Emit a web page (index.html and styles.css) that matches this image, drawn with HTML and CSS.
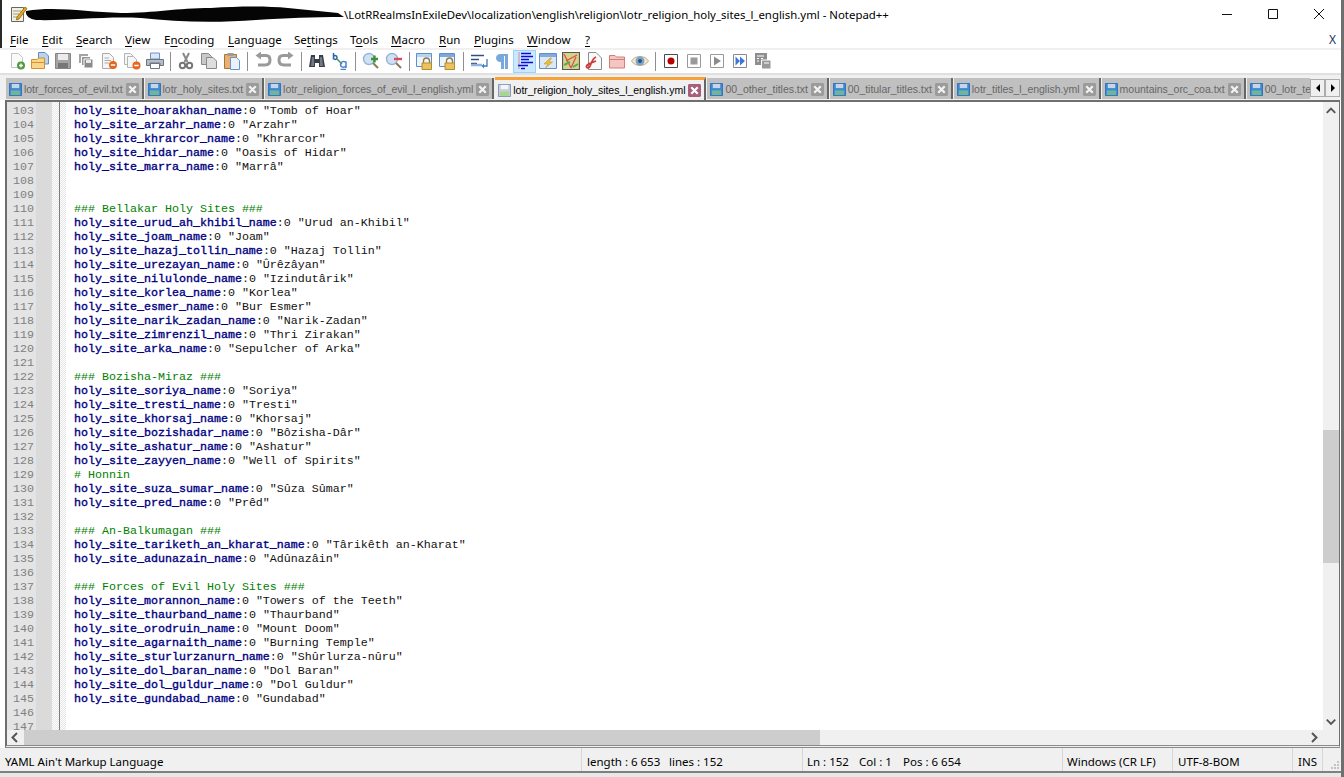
FILE: index.html
```html
<!DOCTYPE html>
<html lang="en">
<head>
<meta charset="utf-8">
<title>Notepad++</title>
<link rel="stylesheet" href="styles.css">
</head>
<body>
<svg class="defs" width="0" height="0" aria-hidden="true">
  <defs>
    <symbol id="floppy" viewBox="0 0 14 14">
      <path d="M0.5 0.5H13.5V13.5H0.5Z" fill="#3f88d6" stroke="#2c6fb8"/>
      <path d="M3 1H11V5.5H3Z" fill="#c6d6e6"/>
      <path d="M2 8H12V13H2Z" fill="#6fb59c"/>
    </symbol>
    <symbol id="floppy-active" viewBox="0 0 14 14">
      <path d="M0.5 0.5H13.5V13.5H0.5Z" fill="#c9cfe0" stroke="#7d8fb8"/>
      <path d="M3 1H11V5.5H3Z" fill="#f4f6fa"/>
      <path d="M2 8H12V13H2Z" fill="#a9d68f"/>
    </symbol>
    <symbol id="close" viewBox="0 0 14 14">
      <rect width="14" height="14" rx="1.5" fill="#9b9b9b"/>
      <path d="M3.5 3.5L10.5 10.5M10.5 3.5L3.5 10.5" stroke="#f2f2f2" stroke-width="2.4"/>
    </symbol>
    <symbol id="close-active" viewBox="0 0 14 14">
      <rect width="14" height="14" rx="1.5" fill="#a55f78"/>
      <path d="M3.5 3.5L10.5 10.5M10.5 3.5L3.5 10.5" stroke="#fff" stroke-width="2.4"/>
    </symbol>
  </defs>
</svg>
<div class="window">
  <header class="titlebar">
    <svg class="app-icon" width="18" height="18" viewBox="0 0 18 18"><path d="M1.5 2.5H13.5V16.5H1.5Z" fill="#f4f0d8" stroke="#666"/><path d="M3 6H11M3 9H9M3 12H8" stroke="#9a9a9a"/><path d="M7 12L15 2L17 3.5L9 14L6.5 15Z" fill="#e8a61c" stroke="#7a5a10" stroke-width=".7"/></svg>
    <svg class="blob" width="320" height="20" viewBox="0 0 318 20"><path d="M0 8C30 3 60 9 95 10C130 10 150 5 185 5C215 3 240 3 262 5L312 10L318 14C285 14 262 15 230 17C190 20 150 19 115 15C80 13 40 18 10 17C3 16-1 12 0 8Z" fill="#050505"/></svg>
    <span class="path">\LotRRealmsInExileDev\localization\english\religion\lotr_religion_holy_sites_l_english.yml - Notepad++</span>
    <div class="controls">
      <svg width="46" height="30" viewBox="0 0 46 30"><path d="M18 14.500H28" stroke="#111"/></svg>
      <svg width="46" height="30" viewBox="0 0 46 30"><path d="M18.500 9.500H27.500V18.500H18.500Z" fill="none" stroke="#111"/></svg>
      <svg width="46" height="30" viewBox="0 0 46 30"><path d="M18 9L28 19M28 9L18 19" stroke="#111"/></svg>
    </div>
  </header>
  <nav class="menubar">
    <span class="m m-file"><u>F</u>ile</span>
    <span class="m m-edit"><u>E</u>dit</span>
    <span class="m m-search"><u>S</u>earch</span>
    <span class="m m-view"><u>V</u>iew</span>
    <span class="m m-enc">E<u>n</u>coding</span>
    <span class="m m-lang"><u>L</u>anguage</span>
    <span class="m m-set">Se<u>t</u>tings</span>
    <span class="m m-tools">T<u>o</u>ols</span>
    <span class="m m-macro"><u>M</u>acro</span>
    <span class="m m-run"><u>R</u>un</span>
    <span class="m m-plug"><u>P</u>lugins</span>
    <span class="m m-win"><u>W</u>indow</span>
    <span class="m"><u>?</u></span>
    <span class="menu-x">X</span>
  </nav>
  <div class="toolbar">
    <span class="b"><svg viewBox="0 0 18 18"><path d="M3.500 1.500H10.500L14.500 5.500V15.500H3.500Z" fill="#fafafa" stroke="#c4c4c4"/><circle cx="13" cy="13.500" r="4" fill="#4f9a3d"/><path d="M13 11.500V15.500M11 13.500H15" stroke="#fff" stroke-width="1.300"/></svg></span>
    <span class="b"><svg viewBox="0 0 18 18"><path d="M7.500 .5H14L17.500 4V12H7.500Z" fill="#bcd3ee" stroke="#5c8fcb"/><path d="M.5 7.500H6L7.500 6H13.500V16.500H.5Z" fill="#f7d58a" stroke="#d98f2c"/><path d="M1 10.500H13" stroke="#d98f2c"/></svg></span>
    <span class="b"><svg viewBox="0 0 18 18"><path d="M1.500 1.500H16.500V16.500H1.500Z" fill="#a4a4a4" stroke="#858585"/><path d="M4 2H14V8H4Z" fill="#ececec"/><path d="M4 11H14V16H4Z" fill="#777"/></svg></span>
    <span class="b"><svg viewBox="0 0 18 18"><path d="M2 2H11V11H2Z" fill="#a4a4a4"/><path d="M4.500 4.500H13.500V13.500H4.500Z" fill="#949494" stroke="#fff"/><path d="M7 7H16V16H7Z" fill="#8a8a8a" stroke="#fff"/><path d="M9 8H14V11H9Z" fill="#e8e8e8"/></svg></span>
    <span class="b"><svg viewBox="0 0 18 18"><path d="M2.500 1.500H9.500L13.500 5.500V16.500H2.500Z" fill="#f6f6f6" stroke="#aaa"/><path d="M4.500 6H9M4.500 8.500H11M4.500 11H9" stroke="#aaa"/><circle cx="13" cy="13" r="4" fill="#e8661c"/><path d="M10.800 13H15.200" stroke="#fff" stroke-width="1.500"/></svg></span>
    <span class="b"><svg viewBox="0 0 18 18"><path d="M1.500 1.500H7.500L10.500 4.500V12.500H1.500Z" fill="#f6f6f6" stroke="#b4b4b4"/><path d="M4.500 4.500H10.500L13.500 7.500V15.500H4.500Z" fill="#f6f6f6" stroke="#b4b4b4"/><circle cx="13.500" cy="13.500" r="4" fill="#e8661c"/><path d="M11.300 13.500H15.700" stroke="#fff" stroke-width="1.500"/></svg></span>
    <span class="b"><svg viewBox="0 0 18 18"><path d="M4.500 1H13.500V7H4.500Z" fill="#dbe7f6" stroke="#6b93c8"/><path d="M.5 7.500H17.500V13.500H14V11H4V13.500H.5Z" fill="#b4bcc8" stroke="#6d7480"/><path d="M4.500 11.500H13.500V16.500H4.500Z" fill="#fff" stroke="#6d7480"/></svg></span>
    <i class="sep"></i>
    <span class="b"><svg viewBox="0 0 18 18"><path d="M12 1L7.500 10M6 1L10.500 10" stroke="#8a8a8a" stroke-width="2"/><circle cx="5.500" cy="13.500" r="2.700" fill="none" stroke="#777" stroke-width="2"/><circle cx="12.500" cy="13.500" r="2.700" fill="none" stroke="#777" stroke-width="2"/></svg></span>
    <span class="b"><svg viewBox="0 0 18 18"><path d="M1.500 1.500H8.500L11.500 4.500V12.500H1.500Z" fill="#c9c9c9" stroke="#8a8a8a"/><path d="M6.500 5.500H13L16.500 9V16.500H6.500Z" fill="#dedede" stroke="#8a8a8a"/></svg></span>
    <span class="b"><svg viewBox="0 0 18 18"><path d="M1.500 2.500H13.500V16.500H1.500Z" fill="#e6b173" stroke="#a9743a"/><path d="M4.500 1H10.500V4H4.500Z" fill="#9b9b9b"/><path d="M7.500 5.500H13.500L16.500 8.500V17.500H7.500Z" fill="#e9f1fb" stroke="#6b93c8"/></svg></span>
    <i class="sep"></i>
    <span class="b"><svg viewBox="0 0 18 18"><path d="M7 3.500H12C15 3.500 16 5.500 16 8C16 11.500 14 13 11 13H4" fill="none" stroke="#9a9a9a" stroke-width="3"/><path d="M7 -.5V7.500L1.500 3.500Z" fill="#9a9a9a"/></svg></span>
    <span class="b"><svg viewBox="0 0 18 18"><path d="M11 3.500H6C3 3.500 2 5.500 2 8C2 11.500 4 13 7 13H14" fill="none" stroke="#9a9a9a" stroke-width="3"/><path d="M11 -.5V7.500L16.500 3.500Z" fill="#9a9a9a"/></svg></span>
    <i class="sep"></i>
    <span class="b"><svg viewBox="0 0 18 18"><path d="M3 3H7V7H11V3H15L17 15H11V11H7V15H1Z" fill="#3a3f46"/><path d="M4 5H6V14H3ZM12 5H14L15 14H12Z" fill="#717b88"/></svg></span>
    <span class="b"><svg viewBox="0 0 18 18"><path d="M2.500 1V7.500M2.500 4.500C4 3 6 3.500 6 5.500C6 7.500 4 8 2.500 6.500" fill="none" stroke="#2a62b4" stroke-width="1.500"/><path d="M6 7L11 12" stroke="#4f9a3d" stroke-width="1.500"/><path d="M15 10.500C13 8.500 9.500 9.500 9.500 12.500C9.500 15.500 13 16 15 14M15 9.500V16M9.500 17.500H15" fill="none" stroke="#4a82d0" stroke-width="1.500"/></svg></span>
    <i class="sep"></i>
    <span class="b"><svg viewBox="0 0 18 18"><circle cx="7" cy="7" r="5.500" fill="#cfe2f5" stroke="#96b5d6" stroke-width="1.400"/><path d="M11 11L16 16" stroke="#8a7a5a" stroke-width="2"/><path d="M12.500 3.500V10.500M9 7H16" stroke="#3f8f34" stroke-width="2.400"/></svg></span>
    <span class="b"><svg viewBox="0 0 18 18"><circle cx="7" cy="7" r="5.500" fill="#cfe2f5" stroke="#96b5d6" stroke-width="1.400"/><path d="M11 11L16 16" stroke="#8a7a5a" stroke-width="2"/><path d="M9 7H17" stroke="#e2465a" stroke-width="2.400"/></svg></span>
    <i class="sep"></i>
    <span class="b"><svg viewBox="0 0 18 18"><path d="M.5 1.500H15.500V14.500H.5Z" fill="#eef4fb" stroke="#5e8fc8"/><path d="M1 2H15V5H1Z" fill="#bcd3ee"/><path d="M7.500 11V9A3 3 0 0 1 13.500 9V11" fill="none" stroke="#8f7a3a" stroke-width="1.300"/><path d="M6 11H15.500V17.500H6Z" fill="#edc25e" stroke="#b58c2c"/></svg></span>
    <span class="b"><svg viewBox="0 0 18 18"><path d="M.5 1.500H15.500V14.500H.5Z" fill="#eef4fb" stroke="#5e8fc8"/><path d="M1 2H15V5H1Z" fill="#7fa8dc"/><path d="M7.500 11V9A3 3 0 0 1 13.500 9V11" fill="none" stroke="#8f7a3a" stroke-width="1.300"/><path d="M6 11H15.500V17.500H6Z" fill="#edc25e" stroke="#b58c2c"/></svg></span>
    <i class="sep"></i>
    <span class="b"><svg viewBox="0 0 18 18"><path d="M1 3.500H14M1 7.500H9M1 11.500H7" stroke="#33507c" stroke-width="1.400"/><path d="M1 13H12" stroke="#8fb3de" stroke-width="2.500"/><path d="M17 7V14H13" fill="none" stroke="#3f78c4" stroke-width="1.300"/><path d="M14 11.500V16.500L11.500 14Z" fill="#3f78c4"/></svg></span>
    <span class="b"><svg viewBox="0 0 18 18"><path d="M15 2H7.500C4.500 2 3 4 3 6C3 8 4.500 10 7.500 10H8V17H11V4H12V17H15Z" fill="#79a9dc"/></svg></span>
    <span class="b active"><svg viewBox="0 0 18 18"><path d="M3 .5V17" stroke="#d0343a" stroke-dasharray="1 1"/><path d="M5 1.500H15M5 4.500H17M5 7.500H13M5 10.500H17M2 13.500H12M5 16.500H9" stroke="#0b0bdc" stroke-width="1.600"/></svg></span>
    <span class="b"><svg viewBox="0 0 18 18"><path d="M.5 1.500H17.500V16.500H.5Z" fill="#dbe8f7" stroke="#5e8fc8"/><path d="M1 2H17V5H1Z" fill="#83aadc"/><path d="M11 6L5 12H9L6.500 16L13.500 10H10L12.500 6Z" fill="#e9c23a" stroke="#c08f1c" stroke-width=".5"/></svg></span>
    <span class="b"><svg viewBox="0 0 18 18"><path d="M.5 .5H17.500V17.500H.5Z" fill="#d6d28a" stroke="#565656" stroke-width="1.200"/><path d="M2 2L9 16M4 9L15 3M9 16L14 5" stroke="#d9534a" stroke-width="1.300"/><path d="M2 13L8 10M11 15L16 12" stroke="#5ea850" stroke-width="2"/></svg></span>
    <span class="b"><svg viewBox="0 0 18 18"><path d="M3.500 .5H11L16.500 6V17.500H3.500Z" fill="#fafafa" stroke="#8c8c8c"/><path d="M11 5C8 6 7 9 5.500 13C5 15 3 17 1.500 15C1 13 3 12.500 6 11L11 9" fill="none" stroke="#cf3a36" stroke-width="1.800"/></svg></span>
    <span class="b"><svg viewBox="0 0 18 18"><path d="M1.500 3.500H7L8.500 5H16.500V16H1.500Z" fill="#f3c6c2" stroke="#d27d78"/><path d="M2 7.500H16" stroke="#d27d78"/></svg></span>
    <span class="b"><svg viewBox="0 0 18 18"><path d="M.5 9C4 3 14 3 17.500 9C14 15 4 15 .5 9Z" fill="#f4ead4" stroke="#c9ab7a"/><circle cx="9" cy="9" r="4.500" fill="#78a6d2"/><circle cx="9" cy="9" r="2" fill="#37506e"/></svg></span>
    <i class="sep"></i>
    <span class="b"><svg viewBox="0 0 18 18"><path d="M2.500 2.500H15.500V15.500H2.500Z" fill="#fff" stroke="#4a4a4a"/><circle cx="9" cy="9" r="3.500" fill="#b40000"/></svg></span>
    <span class="b"><svg viewBox="0 0 18 18"><path d="M2.500 2.500H15.500V15.500H2.500Z" fill="#fff" stroke="#9a9a9a"/><path d="M5.500 5.500H12.500V12.500H5.500Z" fill="#9a9a9a"/></svg></span>
    <span class="b"><svg viewBox="0 0 18 18"><path d="M2.500 2.500H15.500V15.500H2.500Z" fill="#fff" stroke="#9a9a9a"/><path d="M6 4.500L13 9L6 13.500Z" fill="#8c8c8c"/></svg></span>
    <span class="b"><svg viewBox="0 0 18 18"><path d="M2.500 2.500H15.500V15.500H2.500Z" fill="#fff" stroke="#8a8a8a"/><path d="M4.500 4.500L9 9L4.500 13.500ZM9 4.500L14 9L9 13.500Z" fill="#3b78d4"/></svg></span>
    <span class="b"><svg viewBox="0 0 18 18"><path d="M1 1H13V13H1Z" fill="#8e8e8e"/><path d="M3 4H10M3 6.500H5M7 6.500H9M3 9H5" stroke="#fff"/><path d="M7.500 8H17V17H7.500Z" fill="#9a9a9a" stroke="#fff"/><path d="M10 11H15" stroke="#fff"/></svg></span>
  </div>
  <div class="tabbar">
    <div class="tabs">
      <div class="tab"><svg class="ico"><use href="#floppy"/></svg><span>lotr_forces_of_evil.txt</span><svg class="ico"><use href="#close"/></svg></div>
      <div class="tab"><svg class="ico"><use href="#floppy"/></svg><span>lotr_holy_sites.txt</span><svg class="ico"><use href="#close"/></svg></div>
      <div class="tab"><svg class="ico"><use href="#floppy"/></svg><span>lotr_religion_forces_of_evil_l_english.yml</span><svg class="ico"><use href="#close"/></svg></div>
      <div class="tab current"><svg class="ico"><use href="#floppy-active"/></svg><span>lotr_religion_holy_sites_l_english.yml</span><svg class="ico"><use href="#close-active"/></svg></div>
      <div class="tab"><svg class="ico"><use href="#floppy"/></svg><span>00_other_titles.txt</span><svg class="ico"><use href="#close"/></svg></div>
      <div class="tab"><svg class="ico"><use href="#floppy"/></svg><span>00_titular_titles.txt</span><svg class="ico"><use href="#close"/></svg></div>
      <div class="tab"><svg class="ico"><use href="#floppy"/></svg><span>lotr_titles_l_english.yml</span><svg class="ico"><use href="#close"/></svg></div>
      <div class="tab"><svg class="ico"><use href="#floppy"/></svg><span>mountains_orc_coa.txt</span><svg class="ico"><use href="#close"/></svg></div>
      <div class="tab"><svg class="ico"><use href="#floppy"/></svg><span>00_lotr_texts.txt</span><svg class="ico"><use href="#close"/></svg></div>
    </div>
    <div class="tab-arrows">
      <span class="ta"><svg width="6" height="8" viewBox="0 0 6 8"><path d="M5 0V8L1 4Z" fill="#000"/></svg></span>
      <span class="ta"><svg width="6" height="8" viewBox="0 0 6 8"><path d="M1 0V8L5 4Z" fill="#000"/></svg></span>
    </div>
  </div>
  <main class="frame">
    <div class="editor">
      <div class="gutter">
        <div>103</div><div>104</div><div>105</div><div>106</div><div>107</div><div>108</div><div>109</div><div>110</div><div>111</div><div>112</div><div>113</div><div>114</div><div>115</div><div>116</div><div>117</div><div>118</div><div>119</div><div>120</div><div>121</div><div>122</div><div>123</div><div>124</div><div>125</div><div>126</div><div>127</div><div>128</div><div>129</div><div>130</div><div>131</div><div>132</div><div>133</div><div>134</div><div>135</div><div>136</div><div>137</div><div>138</div><div>139</div><div>140</div><div>141</div><div>142</div><div>143</div><div>144</div><div>145</div><div>146</div><div>147</div>
      </div>
      <div class="hatch"></div>
      <div class="rule"></div>
      <div class="hatch short"></div>
      <div class="code">
        <div><b>holy_site_hoarakhan_name</b>:0 "Tomb of Hoar"</div>
        <div><b>holy_site_arzahr_name</b>:0 "Arzahr"</div>
        <div><b>holy_site_khrarcor_name</b>:0 "Khrarcor"</div>
        <div><b>holy_site_hidar_name</b>:0 "Oasis of Hidar"</div>
        <div><b>holy_site_marra_name</b>:0 "Marrâ"</div>
        <div></div>
        <div></div>
        <div class="c">### Bellakar Holy Sites ###</div>
        <div><b>holy_site_urud_ah_khibil_name</b>:0 "Urud an-Khibil"</div>
        <div><b>holy_site_joam_name</b>:0 "Joam"</div>
        <div><b>holy_site_hazaj_tollin_name</b>:0 "Hazaj Tollin"</div>
        <div><b>holy_site_urezayan_name</b>:0 "Ûrêzâyan"</div>
        <div><b>holy_site_nilulonde_name</b>:0 "Izindutârik"</div>
        <div><b>holy_site_korlea_name</b>:0 "Korlea"</div>
        <div><b>holy_site_esmer_name</b>:0 "Bur Esmer"</div>
        <div><b>holy_site_narik_zadan_name</b>:0 "Narik-Zadan"</div>
        <div><b>holy_site_zimrenzil_name</b>:0 "Thri Zirakan"</div>
        <div><b>holy_site_arka_name</b>:0 "Sepulcher of Arka"</div>
        <div></div>
        <div class="c">### Bozisha-Miraz ###</div>
        <div><b>holy_site_soriya_name</b>:0 "Soriya"</div>
        <div><b>holy_site_tresti_name</b>:0 "Tresti"</div>
        <div><b>holy_site_khorsaj_name</b>:0 "Khorsaj"</div>
        <div><b>holy_site_bozishadar_name</b>:0 "Bôzisha-Dâr"</div>
        <div><b>holy_site_ashatur_name</b>:0 "Ashatur"</div>
        <div><b>holy_site_zayyen_name</b>:0 "Well of Spirits"</div>
        <div class="c"># Honnin</div>
        <div><b>holy_site_suza_sumar_name</b>:0 "Sûza Sûmar"</div>
        <div><b>holy_site_pred_name</b>:0 "Prêd"</div>
        <div></div>
        <div class="c">### An-Balkumagan ###</div>
        <div><b>holy_site_tariketh_an_kharat_name</b>:0 "Târikêth an-Kharat"</div>
        <div><b>holy_site_adunazain_name</b>:0 "Adûnazâin"</div>
        <div></div>
        <div class="c">### Forces of Evil Holy Sites ###</div>
        <div><b>holy_site_morannon_name</b>:0 "Towers of the Teeth"</div>
        <div><b>holy_site_thaurband_name</b>:0 "Thaurband"</div>
        <div><b>holy_site_orodruin_name</b>:0 "Mount Doom"</div>
        <div><b>holy_site_agarnaith_name</b>:0 "Burning Temple"</div>
        <div><b>holy_site_sturlurzanurn_name</b>:0 "Shûrlurza-nûru"</div>
        <div><b>holy_site_dol_baran_name</b>:0 "Dol Baran"</div>
        <div><b>holy_site_dol_guldur_name</b>:0 "Dol Guldur"</div>
        <div><b>holy_site_gundabad_name</b>:0 "Gundabad"</div>
        <div></div>
        <div></div>
      </div>
      <div class="vbar">
        <svg class="arrow" width="16" height="17" viewBox="0 0 17 17"><path d="M4 11L8.500 6.500L13 11" fill="none" stroke="#555" stroke-width="2"/></svg>
        <div class="vtrack"><div class="vthumb"></div></div>
        <svg class="arrow" width="16" height="17" viewBox="0 0 17 17"><path d="M4 6.500L8.500 11L13 6.500" fill="none" stroke="#555" stroke-width="2"/></svg>
      </div>
    </div>
    <div class="hbar">
      <svg class="arrow" width="17" height="15" viewBox="0 0 17 15"><path d="M10 3L5.500 7.500L10 12" fill="none" stroke="#555" stroke-width="2"/></svg>
      <div class="hthumb"></div>
      <div class="htrack"></div>
      <svg class="arrow" width="17" height="15" viewBox="0 0 17 15"><path d="M6 3L10.500 7.500L6 12" fill="none" stroke="#555" stroke-width="2"/></svg>
      <div class="corner"></div>
    </div>
  </main>
  <footer class="status">
    <div class="s s1">YAML Ain't Markup Language</div>
    <div class="s s2"><span class="s-length">length : 6 653</span><span>lines : 152</span></div>
    <div class="s s3"><span class="s-ln">Ln : 152</span><span class="s-col">Col : 1</span><span>Pos : 6 654</span></div>
    <div class="s s4">Windows (CR LF)</div>
    <div class="s s5">UTF-8-BOM</div>
    <div class="s s6">INS</div>
    <div class="s s7"><svg width="12" height="12" viewBox="0 0 12 12"><path d="M9 2H11V4H9ZM6 5H8V7H6ZM9 5H11V7H9ZM3 8H5V10H3ZM6 8H8V10H6ZM9 8H11V10H9Z" fill="#c4c4c4"/></svg></div>
  </footer>
  <div class="foot"></div>
</div>
</body>
</html>
```
FILE: styles.css
```css
* { box-sizing: border-box; }
html, body { margin: 0; padding: 0; height: 100%; overflow: hidden; background: #fff; }
body { font-family: "Noto Sans", "Liberation Sans", sans-serif; font-size: 11.5px; color: #000; }
.defs { display: block; height: 0; }
.window { width: 1344px; height: 777px; display: flex; flex-direction: column; border-right: 3px solid #6f6f6f; overflow: hidden; }

.titlebar { height: 30px; flex: none; display: flex; align-items: center; padding-left: 10px; box-shadow: inset 2px 0 #2a2a2a; }
.app-icon { flex: none; margin-top: -2px; }
.blob { flex: none; margin-left: -3px; margin-top: -4px; }
.path { white-space: nowrap; margin-left: -1px; margin-top: -1px; font-size: 11.4px; }
.controls { margin-left: auto; display: flex; margin-right: -1px; }
.controls svg { flex: none; }

.menubar { height: 18px; flex: none; display: flex; align-items: center; padding-left: 10px; white-space: nowrap; background: #fff; box-shadow: inset 2px 0 #2a2a2a; }
.m { flex: none; }
.m u { text-decoration-thickness: 1px; text-underline-offset: 2px; }
.m-file { width: 32px; } .m-edit { width: 34px; } .m-search { width: 49px; } .m-view { width: 39px; }
.m-enc { width: 64px; } .m-lang { width: 66px; } .m-set { width: 56px; } .m-tools { width: 41px; }
.m-macro { width: 48px; } .m-run { width: 35px; } .m-plug { width: 53px; } .m-win { width: 58px; }
.menu-x { margin-left: auto; margin-right: 5px; color: #20355e; font-size: 12px; }

.toolbar { height: 25px; flex: none; display: flex; align-items: center; padding: 0 0 1px 5px; border-top: 2px solid #f0f0f0; background: #fff; }
.b { width: 23px; height: 23px; flex: none; display: flex; align-items: center; justify-content: center; }
.b svg { width: 18px; height: 18px; display: block; }
.b.active { background: #cce8ff; border: 1px solid #99d1ff; }
.sep { width: 1px; height: 19px; background: #8f8f8f; flex: none; margin: 0 3px 0 4px; }

.tabbar { height: 27px; flex: none; display: flex; align-items: flex-end; background: #f0f0f0; border-top: 2px solid #e0e0e0; padding: 0 1px 0 6px; }
.tabs { flex: 1; min-width: 0; display: flex; overflow: hidden; height: 23px; gap: 1px; }
.tab { flex: none; box-sizing: content-box; height: 20px; margin-top: 1px; background: #c0c0c0; color: #676767; display: flex; align-items: center; padding: 1px 3px 0; white-space: nowrap; border-right: 2px solid #666; font-family: "Liberation Sans", sans-serif; font-size: 10.5px; letter-spacing: -0.03px; }
.tab span { margin: 0 3px 0 2px; }
.tab.current { background: #f0f0f0; color: #000; height: 20px; margin-top: 0; padding-top: 0; border-top: 3px solid #f7a33a; }
.ico { width: 13px; height: 13px; flex: none; display: block; }
.tab-arrows { width: 30px; flex: none; display: flex; height: 18px; margin-bottom: 3px; }
.ta { flex: 1; border: 1px solid #acacac; display: flex; align-items: center; justify-content: center; background: #efefef; }

.frame { flex: 1; min-height: 0; display: flex; flex-direction: column; margin: 0 1px 0 5px; border-left: 2px solid #6f6f6f; border-right: 1px solid #6f6f6f; border-top: 2px solid #6f6f6f; border-bottom: 3px double #8a8a8a; background: #f0f0f0; }
.editor { flex: 1; min-height: 0; display: flex; overflow: hidden; background: #fff; }
.gutter { width: 45px; flex: none; height: 100%; overflow: hidden; padding: 2px 0 0 6px; font: 11.67px/14px "Liberation Mono", monospace; color: #808080; background: linear-gradient(90deg, #e4e4e4 0 29px, #dadada 29px); }
.gutter div { height: 14px; }
.hatch { width: 7px; flex: none; background: repeating-conic-gradient(#e6e6e6 0 25%, #fff 0 50%) 0 0 / 2px 2px; }
.hatch.short { width: 6px; }
.rule { width: 1px; flex: none; background: #808080; }
.code { flex: 1; min-width: 0; padding: 2px 0 0 8px; font: 11.67px/14px "Liberation Mono", monospace; color: #111; overflow: hidden; }
.code div { height: 14px; white-space: pre; }
.code b { color: #000080; font-weight: 400; -webkit-text-stroke: 0.35px #000080; }
.code .c { color: #008000; }
.vbar { width: 16px; flex: none; display: flex; flex-direction: column; background: #f0f0f0; }
.vtrack { flex: 1; min-height: 0; padding-top: 311px; }
.vthumb { height: 133px; background: #cdcdcd; }
.arrow { flex: none; display: block; }
.hbar { height: 15px; flex: none; display: flex; background: #f0f0f0; }
.hthumb { width: 796px; flex: none; background: #cdcdcd; }
.htrack { flex: 1; }
.corner { width: 16px; flex: none; background: #f0f0f0; }

.status { height: 25px; flex: none; display: flex; background: #f0f0f0; border-bottom: 2px solid #808080; }
.s { flex: none; height: 100%; display: flex; align-items: center; white-space: nowrap; border-right: 1px solid #d6d6d6; padding: 3px 0 0 5px; }
.s1 { width: 582px; } .s2 { width: 221px; } .s3 { width: 260px; padding-left: 4px; } .s4 { width: 110px; padding-left: 4px; } .s5 { width: 120px; } .s6 { width: 30px; }
.s7 { flex: 1; border: 0; justify-content: flex-end; align-items: flex-end; padding-right: 3px; }
.s-length { width: 82px; } .s-ln { width: 52px; } .s-col { width: 44px; }
.foot { height: 4px; flex: none; background: #e8e8e8; }
```
